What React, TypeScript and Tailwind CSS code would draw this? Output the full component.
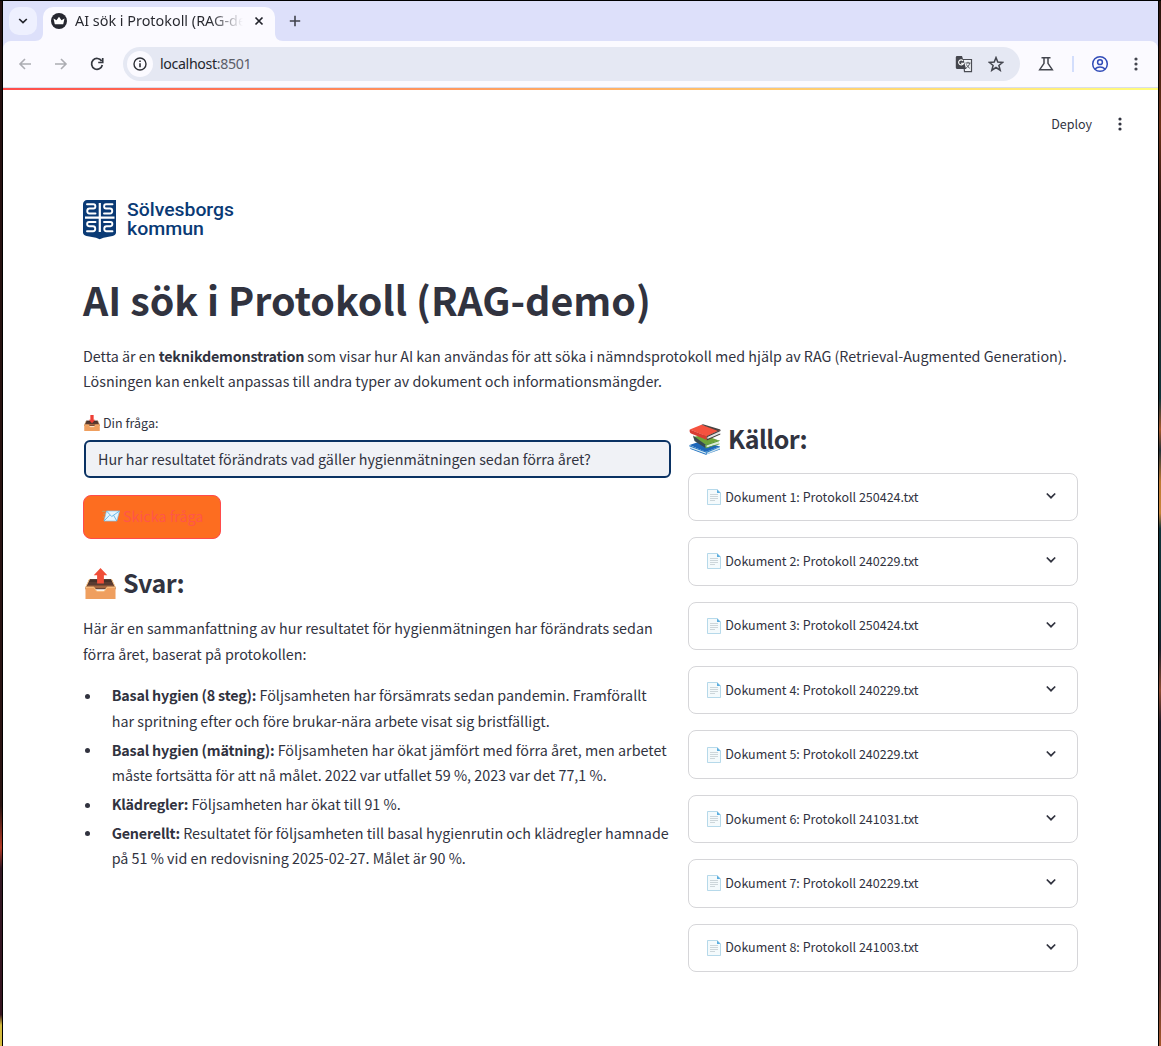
import type { ReactNode } from 'react';

const ICON = 'block shrink-0';

function Dots({ className = '' }: { className?: string }) {
  return (
    <svg width="16" height="16" viewBox="0 0 16 16" className={`${ICON} ${className}`} fill="currentColor">
      <circle cx="8" cy="3" r="1.6" />
      <circle cx="8" cy="8" r="1.6" />
      <circle cx="8" cy="13" r="1.6" />
    </svg>
  );
}

function Tray({ size, up = false }: { size: number; up?: boolean }) {
  return (
    <svg width={size} height={size} viewBox="0 0 32 32" className={ICON}>
      <path d="M4.500 11.500h23L31.500 20v2H.5v-2z" fill="#5a3b31" />
      <path d="M4.500 11.500h23l1.300 3H3.200z" fill="#463029" />
      <path d="M2.500 18h27l1.500 3H1z" fill="#a2653f" />
      <path d="M.5 19.500h8.300c1.800 0 1.800 4.200 4 4.200h6.400c2.200 0 2.200-4.200 4-4.200h8.300V32H.5z" fill="#ef9f5f" />
      <path d="M4.800 11.300L.7 19.800h8c1.800 0 1.800 4.200 4 4.200h6.600c2.200 0 2.200-4.200 4-4.200h8L27.200 11.300" fill="none" stroke="#fbc68a" strokeWidth="1" />
      {up ? (
        <path d="M16 0l7 7.500h-3.500V16h-7V7.500H9z" fill="#f04e38" />
      ) : (
        <path d="M16 16.500l6.500-7h-3.200V0h-6.600v9.500H9.500z" fill="#ee3f36" />
      )}
    </svg>
  );
}

function Envelope() {
  return (
    <svg width="18" height="14" viewBox="0 0 18 14" className={ICON}>
      <path d="M4.500 2h13L14.800 12H2z" fill="#e8f5fc" stroke="#80c6ee" strokeWidth=".7" />
      <path d="M4.500 2l5.200 5.500L17.500 2M2 12l5.600-5.800M14.800 12l-3.300-5.900" fill="none" stroke="#5fb2e4" strokeWidth=".9" />
      <path d="M.2 2.300h3.300M1.200 5h1.800M.7 8h1.500" stroke="#b5a16d" strokeWidth=".9" />
    </svg>
  );
}

function Books() {
  return (
    <svg width="32" height="31" viewBox="0 0 32 31" className={ICON}>
      <path d="M.5 21l12-4 18.500 5.500-13 6z" fill="#1e66b8" />
      <path d="M.5 21.500l17 6.500c-.8.800-.8 1.800-.3 2.500L1.500 24c-1-.6-1.300-1.800-1-2.500z" fill="#d5e9f0" />
      <path d="M.3 21.300l17.200 6.400v1L.3 22.300zM1 24l16.500 6v.9L1.500 25z" fill="#1c6fc0" />
      <path d="M17.200 27.800L31 22.300v2.800L17.500 30.600z" fill="#cfe5ee" />
      <path d="M17.200 27.800L31 22.300v.8L18 28.700v1.400l13-5.400v.8l-13.800 5.100z" fill="#2b7cc6" />
      <path d="M4 13l11-2 15 5.500-12 5z" fill="#6ea43a" />
      <path d="M4 11.500l13 9.500-.5 3L5.500 17z" fill="#394a4e" />
      <path d="M16.500 21L30 16.300v3.300L17 24z" fill="#dcebd8" />
      <path d="M16.500 20.500L30.500 16v.9L17.500 21.600v1.800l13-4v.8L16.500 24.600z" fill="#5a9b36" />
      <path d="M.8 5.500L12.500.8 31 6l-13 6.500z" fill="#f5523f" />
      <path d="M12.500.8l1.500-.5L31.500 5.500 29 7z" fill="#4a4240" />
      <path d="M.8 5.500L18 12.300c-.7 1.200-.6 2.600 0 3.700L2 9.500C.6 8.700.4 6.700.8 5.500z" fill="#d83b31" />
      <path d="M18 12.500L30.500 7v3.400L18 15.500z" fill="#e3e4e4" />
      <path d="M18 11.900L31.500 5.800v1.100L18.400 13v2l12.900-5.400v.9L17.800 16.400z" fill="#443b3b" />
    </svg>
  );
}

function Page() {
  return (
    <svg width="14" height="16" viewBox="0 0 14 16" className={ICON}>
      <path d="M.5.500h9.700l3.300 3.300v11.700H.5z" fill="#f4fafc" stroke="#a5cfe4" strokeWidth=".8" />
      <path d="M10 .5v3.500h3.500z" fill="#5aaee0" />
      <path d="M3 5.500h8M3 7.500h8M3 9.500h8M3 11.500h5" stroke="#c3cdd1" strokeWidth=".8" />
    </svg>
  );
}

function Logo() {
  return (
    <svg width="152" height="40" viewBox="0 0 152 40" className={ICON}>
      <path d="M4 0H33V32.500c0 2-1.500 3-3.500 3.600l-9 1.600L16.700 39.300 13 37.700l-9.500-1.600C1.500 35.500 0 34.500 0 32.500V4C0 2 2 0 4 0z" fill="#0a3a75" />
      <path d="M16.800 3v29M2 17.700h29.500" stroke="#fff" strokeWidth="2.200" />
      <g fill="none" stroke="#fff" strokeWidth="1.900" strokeLinecap="round" strokeLinejoin="round">
        <path d="M4 4.300h6.500c2.500 0 2.500 4.200 0 4.200H6.500c-3 0-3 5 0 5H12.500" />
        <path d="M29.500 4.300H23c-2.500 0-2.500 4.200 0 4.200h4c3 0 3 5 0 5h-6" />
        <path d="M12.500 22H6c-2.500 0-2.500 4.200 0 4.200h4c3 0 3 5 0 5H4" />
        <path d="M21 22h6.500c2.500 0 2.500 4.200 0 4.200h-4c-3 0-3 5 0 5h6" />
      </g>
      <g fill="#0a3a75" fontFamily="Roboto, sans-serif" fontWeight="500" fontSize="17.500">
        <text x="44" y="16" textLength="107" lengthAdjust="spacingAndGlyphs">Sölvesborgs</text>
        <text x="44" y="34.500" textLength="77" lengthAdjust="spacingAndGlyphs">kommun</text>
      </g>
    </svg>
  );
}

function Browser() {
  return (
    <header className="font-['Noto_Sans',sans-serif]">
      <div className="flex h-10 items-end bg-[#dde0fa]">
        <div className="mb-1.5 ml-1.5 flex size-7 items-center justify-center rounded-[10px] bg-[#eef0fe]">
          <svg width="10" height="8" viewBox="0 0 10 8" className={ICON}><path d="M1.200 2l3.800 3.600L8.800 2" fill="none" stroke="#22242b" strokeWidth="1.700" /></svg>
        </div>
        <svg width="8" height="8" viewBox="0 0 8 8" className={`${ICON} -ml-0.5`}><path d="M8 0v8H0c5 0 8-3 8-8" fill="#fbfaff" /></svg>
        <div className="flex h-[34px] w-[232px] items-center rounded-t-[10px] bg-[#fbfaff] pb-[7px] pl-2">
          <svg width="16" height="16" viewBox="0 0 16 16" className={ICON}>
            <circle cx="8" cy="8" r="8" fill="#262730" />
            <path d="M2.500 5.500l3 1.800L8 3.800l2.500 3.500 3-1.800-1.300 5.700H3.800z" fill="#fff" />
          </svg>
          <span className="ml-2 w-[168px] overflow-hidden whitespace-nowrap bg-gradient-to-r from-[#26272e] from-80% to-transparent bg-clip-text text-[14.400px] leading-6 text-transparent">AI sök i Protokoll (RAG-demo)</span>
          <svg width="10" height="10" viewBox="0 0 10 10" className={`${ICON} ml-[11px]`}><path d="M1.500 1.500l7 7m0-7l-7 7" stroke="#22242b" strokeWidth="1.700" /></svg>
        </div>
        <svg width="8" height="8" viewBox="0 0 8 8" className={ICON}><path d="M0 0v8h8C3 8 0 5 0 0" fill="#fbfaff" /></svg>
        <svg width="12" height="12" viewBox="0 0 12 12" className={`${ICON} mb-3.5 ml-1.5`}><path d="M6 .8v10.400M.8 6h10.400" stroke="#40434c" strokeWidth="1.600" /></svg>
      </div>
      <div className="bg-[#dde0fa]">
        <div className="flex h-[46px] items-center rounded-t-lg bg-[#fbfaff] pl-[15px] text-[#44464f]">
          <svg width="14" height="12" viewBox="0 0 14 12" className={`${ICON} text-[#acadb3]`}><path d="M13 6H2M7 1L2 6l5 5" fill="none" stroke="currentColor" strokeWidth="1.600" /></svg>
          <svg width="14" height="12" viewBox="0 0 14 12" className={`${ICON} ml-[22px] text-[#acadb3]`}><path d="M1 6h11M7 1l5 5-5 5" fill="none" stroke="currentColor" strokeWidth="1.600" /></svg>
          <svg width="14" height="14" viewBox="0 0 14 14" className={`${ICON} ml-[22px] text-[#34373f]`}><path d="M11.600 4A5.400 5.400 0 1 0 12.300 8M12.700 1v4.500H8.200" fill="none" stroke="currentColor" strokeWidth="1.700" /></svg>
          <div className="ml-[19px] flex h-[34px] w-[897px] items-center rounded-full bg-[#e5e8f3] pl-1">
            <div className="flex size-[26px] items-center justify-center rounded-full bg-[#fbfaff]">
              <svg width="14" height="14" viewBox="0 0 14 14" className={`${ICON} text-[#2d2f36]`}><circle cx="7" cy="7" r="6" fill="none" stroke="currentColor" strokeWidth="1.400" /><path d="M7 6.300v4M7 3.500v1.600" stroke="currentColor" strokeWidth="1.600" /></svg>
            </div>
            <span className="ml-[7px] flex-1 text-[14.200px] leading-5 tracking-[-0.35px] text-[#24262d]">localhost<span className="text-[#5b5e68]">:8501</span></span>
            <svg width="18" height="18" viewBox="0 0 18 18" className={ICON}>
              <path d="M8.300 4.500h8.200v12.200H9.500z" fill="#f1f3f8" stroke="#4a4c53" strokeWidth="1.200" />
              <path d="M2 1h5l4.200 13H2A1.400 1.400 0 0 1 .8 12.600V2.200A1.400 1.400 0 0 1 2 1z" fill="#44464d" />
              <path d="M8.200 6A2.500 2.500 0 1 0 8.500 8.200H6" fill="none" stroke="#fff" strokeWidth="1.100" />
              <path d="M10.500 8h5M13 6.800V8m1.800 0c-.5 2.300-2 4-3.800 5.200M11.500 9.500c.8 1.800 2 3 3.300 3.800" fill="none" stroke="#55585f" strokeWidth="1" />
            </svg>
            <svg width="16" height="16" viewBox="0 0 16 16" className={`${ICON} ml-[15px] mr-4`}><path d="M8 1.600l1.800 4.500 4.900.3-3.800 3.100 1.300 4.700L8 11.500l-4.200 2.700 1.300-4.700L1.300 6.400l4.900-.3z" fill="none" stroke="currentColor" strokeWidth="1.500" /></svg>
          </div>
          <svg width="16" height="16" viewBox="0 0 16 16" className={`${ICON} ml-[18px]`}><path d="M3.500 1.800h9M6 2v5.300L1.700 13.700h12.600L10 7.300V2" fill="none" stroke="currentColor" strokeWidth="1.500" /></svg>
          <div className="ml-[18px] h-4 w-0.5 bg-[#d3defc]" />
          <svg width="18" height="18" viewBox="0 0 18 18" className={`${ICON} ml-[17px] text-[#314cb8]`}><circle cx="9" cy="9" r="7.300" fill="none" stroke="currentColor" strokeWidth="1.500" /><circle cx="9" cy="7.200" r="2.400" fill="none" stroke="currentColor" strokeWidth="1.500" /><path d="M4 14c2.600-2.700 7.400-2.700 10 0" fill="none" stroke="currentColor" strokeWidth="1.500" /></svg>
          <Dots className="ml-[19px]" />
        </div>
      </div>
      <div className="h-px bg-[#d9ddec]" />
      <div className="h-0.5 bg-gradient-to-r from-[#ff4b4b] to-[#fffd80]" />
    </header>
  );
}

function Line({ children }: { children: ReactNode }) {
  return <span className="block whitespace-nowrap">{children}</span>;
}

function Strong({ children }: { children: ReactNode }) {
  return <b className="tracking-[-0.200px]">{children}</b>;
}

const answers: { title: string; lines: string[] }[] = [
  { title: 'Basal hygien (8 steg):', lines: ['Följsamheten har försämrats sedan pandemin. Framförallt', 'har spritning efter och före brukar-nära arbete visat sig bristfälligt.'] },
  { title: 'Basal hygien (mätning):', lines: ['Följsamheten har ökat jämfört med förra året, men arbetet', 'måste fortsätta för att nå målet. 2022 var utfallet 59 %, 2023 var det 77,1 %.'] },
  { title: 'Klädregler:', lines: ['Följsamheten har ökat till 91 %.'] },
  { title: 'Generellt:', lines: ['Resultatet för följsamheten till basal hygienrutin och klädregler hamnade', 'på 51 % vid en redovisning 2025-02-27. Målet är 90 %.'] },
];

const documents = ['250424', '240229', '250424', '240229', '240229', '241031', '240229', '241003'];

export default function App() {
  return (
    <div className="h-[1046px] w-[1161px] overflow-hidden bg-black pt-px">
      <div className="flex h-full">
        <div className="w-[3px] shrink-0 border-r border-black bg-[linear-gradient(#241010_0%,#2a1412_77%,#b43a25_81%,#321824_83%,#35141f_97%,#d5bb3d_98%)]" />
        <div className="h-full w-[1155px] shrink-0 bg-white">
          <Browser />
          <main className="font-['Noto_Sans_CJK_SC',sans-serif] text-[14.320px] leading-[25.600px] text-[#31333f]">
            <div className="flex h-[68px] items-center justify-end pr-[30px] text-[12.500px]">
              <span>Deploy</span>
              <Dots className="ml-5" />
            </div>
            <div className="ml-20 w-[995px] pt-[42px]">
              <Logo />
              <h1 className="mt-8 whitespace-nowrap text-[39.400px] font-bold leading-[53px]">AI sök i Protokoll (RAG-demo)</h1>
              <p className="mt-[17.600px]">
                <Line>Detta är en <Strong>teknikdemonstration</Strong> som visar hur AI kan användas för att söka i nämndsprotokoll med hjälp av RAG (Retrieval-Augmented Generation).</Line>
                <Line>Lösningen kan enkelt anpassas till andra typer av dokument och informationsmängder.</Line>
              </p>
              <div className="mt-[17.400px] flex gap-4">
                <section className="w-[589px] shrink-0">
                  <div className="flex h-6 items-center pl-px text-[12.500px]"><Tray size={16} /><span className="ml-[3px]">Din fråga:</span></div>
                  <div className="ml-px mt-[5px] flex h-[38px] w-[587px] items-center rounded-md border-2 border-[#0a3263] bg-[#f0f2f6] pl-3">Hur har resultatet förändrats vad gäller hygienmätningen sedan förra året?</div>
                  <button className="mt-[17px] flex h-11 w-[138px] items-center rounded-lg border border-[#ff4b4b] bg-[#fd6d20] pb-0.5 pl-[18px] text-[#ff554a]"><Envelope /><span className="ml-[3px]">Skicka fråga</span></button>
                  <h2 className="mt-[25px] flex h-[38px] items-center pl-0.5 text-[25px] font-bold tracking-[-0.500px]"><Tray size={31} up /><span className="ml-[7px]">Svar:</span></h2>
                  <p className="mt-[13px]">
                    <Line>Här är en sammanfattning av hur resultatet för hygienmätningen har förändrats sedan</Line>
                    <Line>förra året, baserat på protokollen:</Line>
                  </p>
                  <ul className="mt-4 flex flex-col gap-[3.200px]">
                    {answers.map((a) => (
                      <li key={a.title} className="flex">
                        <span className="ml-0.5 mr-[21.700px] mt-[11.600px] size-[5px] shrink-0 rounded-full bg-[#31333f]" />
                        <div>
                          <Line><Strong>{a.title}</Strong> {a.lines[0]}</Line>
                          {a.lines.slice(1).map((l) => <Line key={l}>{l}</Line>)}
                        </div>
                      </li>
                    ))}
                  </ul>
                </section>
                <section className="w-[390px] shrink-0">
                  <h2 className="mt-[9px] flex h-[38px] items-center pl-px text-[25px] font-bold tracking-[-0.500px]"><Books /><span className="ml-[7px]">Källor:</span></h2>
                  <div className="mt-[14.600px] flex flex-col gap-4">
                    {documents.map((d, i) => (
                      <div key={i} className="flex h-[48.400px] items-center rounded-lg border border-[#d6d6d9] pl-[18px] pr-[21px] text-[12.520px]">
                        <Page />
                        <span className="mb-px ml-[4.200px] flex-1">Dokument {i + 1}: Protokoll {d}.txt</span>
                        <svg width="10" height="8" viewBox="0 0 10 8" className={`${ICON} mb-0.5`}><path d="M.8 1.500L5 5.700l4.200-4.200" fill="none" stroke="#31333f" strokeWidth="1.700" /></svg>
                      </div>
                    ))}
                  </div>
                </section>
              </div>
            </div>
          </main>
        </div>
        <div className="w-[3px] shrink-0 border-l border-black bg-[linear-gradient(#26130d_0%,#6c3218_12%,#2c1714_20%,#12343a_38%,#a85a2d_41%,#263238_43%,#bd7a33_46%,#c8853a_49%,#12343a_50.500%,#102930_60%,#18202a_62%,#8e4c32_66%,#1f1c29_69%,#13202c_80%,#49292c_93%,#a85a2d_100%)]" />
      </div>
    </div>
  );
}
